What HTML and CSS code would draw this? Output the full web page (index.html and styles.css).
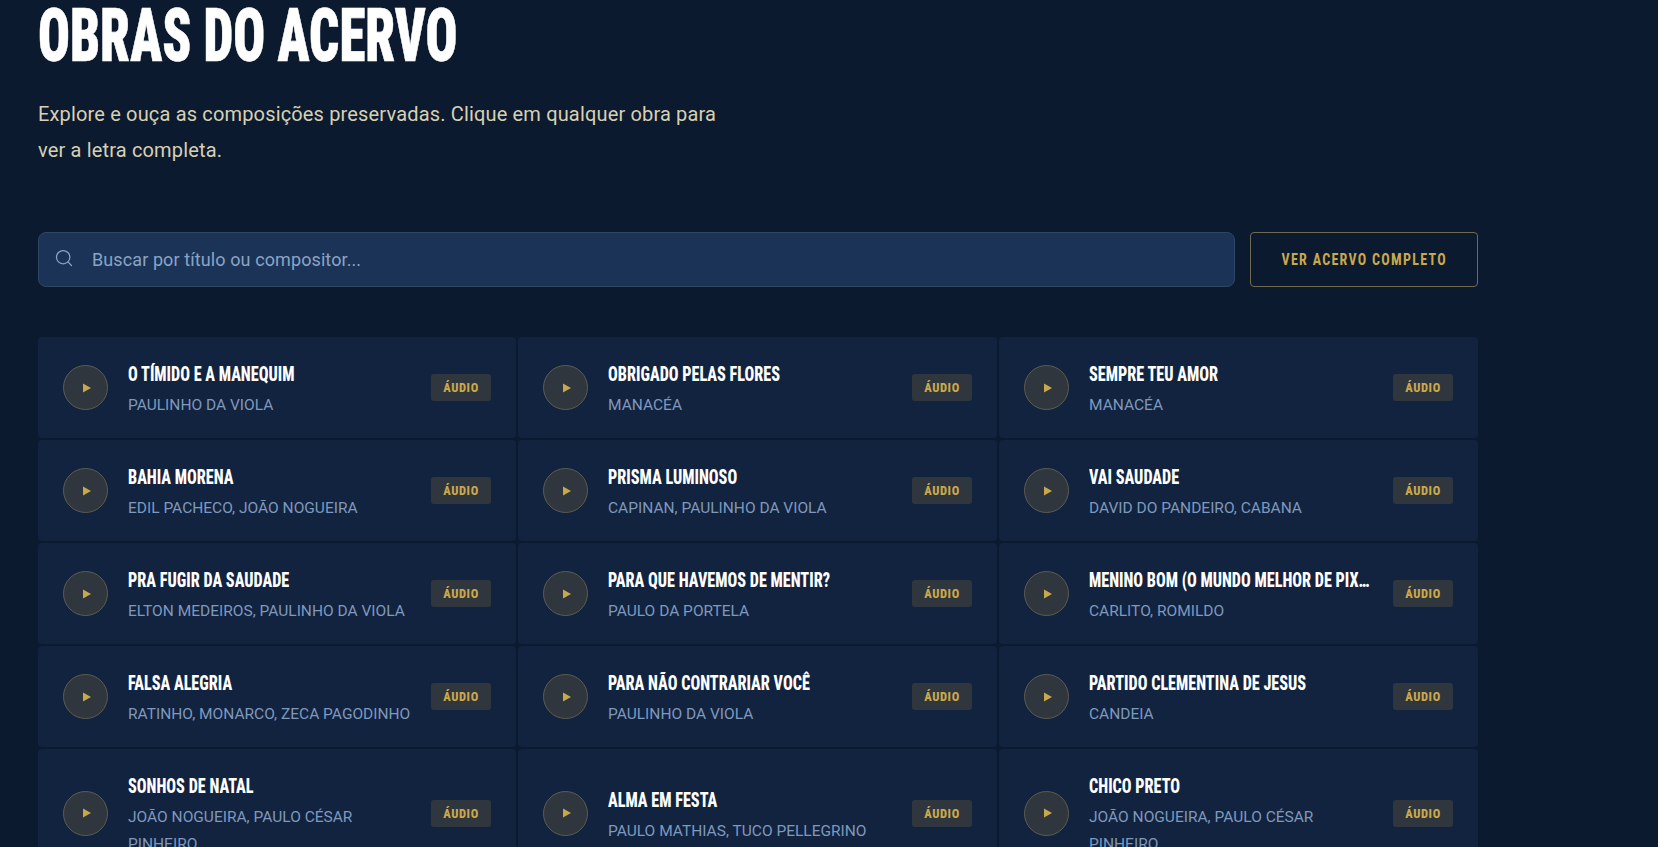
FILE: index.html
```html
<!DOCTYPE html>
<html lang="pt-BR">
<head>
    <meta charset="UTF-8">
    <meta name="viewport" content="width=device-width, initial-scale=1.0">
    <title>Obras do Acervo</title>
    <link rel="stylesheet" href="styles.css">
</head>
<body>
    <main class="container">
        <h1>Obras do Acervo</h1>
        <p class="intro">Explore e ouça as composições preservadas. Clique em qualquer obra para ver a letra completa.</p>

        <div class="toolbar">
            <label class="search">
                <svg class="search-icon" viewBox="0 0 24 24" width="20" height="20" fill="none" stroke="currentColor" stroke-width="1.5" stroke-linecap="round" stroke-linejoin="round"><circle cx="11" cy="11" r="8"/><path d="m21 21-4.3-4.3"/></svg>
                <input type="text" placeholder="Buscar por título ou compositor...">
            </label>
            <a class="btn-all" href="#"><span>Ver acervo completo</span></a>
        </div>

        <div class="grid">
            <div class="card"><span class="play"><svg viewBox="0 0 8 10" width="8" height="10"><path d="M0 0.5 8 5 0 9.5z"/></svg></span><div class="info"><div class="name">O Tímido e a Manequim</div><div class="author">Paulinho da Viola</div></div><span class="badge">Áudio</span></div>
            <div class="card"><span class="play"><svg viewBox="0 0 8 10" width="8" height="10"><path d="M0 0.5 8 5 0 9.5z"/></svg></span><div class="info"><div class="name">Obrigado pelas Flores</div><div class="author">Manacéa</div></div><span class="badge">Áudio</span></div>
            <div class="card"><span class="play"><svg viewBox="0 0 8 10" width="8" height="10"><path d="M0 0.5 8 5 0 9.5z"/></svg></span><div class="info"><div class="name">Sempre Teu Amor</div><div class="author">Manacéa</div></div><span class="badge">Áudio</span></div>

            <div class="card"><span class="play"><svg viewBox="0 0 8 10" width="8" height="10"><path d="M0 0.5 8 5 0 9.5z"/></svg></span><div class="info"><div class="name">Bahia Morena</div><div class="author">Edil Pacheco, João Nogueira</div></div><span class="badge">Áudio</span></div>
            <div class="card"><span class="play"><svg viewBox="0 0 8 10" width="8" height="10"><path d="M0 0.5 8 5 0 9.5z"/></svg></span><div class="info"><div class="name">Prisma Luminoso</div><div class="author">Capinan, Paulinho da Viola</div></div><span class="badge">Áudio</span></div>
            <div class="card"><span class="play"><svg viewBox="0 0 8 10" width="8" height="10"><path d="M0 0.5 8 5 0 9.5z"/></svg></span><div class="info"><div class="name">Vai Saudade</div><div class="author">David do Pandeiro, Cabana</div></div><span class="badge">Áudio</span></div>

            <div class="card"><span class="play"><svg viewBox="0 0 8 10" width="8" height="10"><path d="M0 0.5 8 5 0 9.5z"/></svg></span><div class="info"><div class="name">Pra Fugir da Saudade</div><div class="author">Elton Medeiros, Paulinho da Viola</div></div><span class="badge">Áudio</span></div>
            <div class="card"><span class="play"><svg viewBox="0 0 8 10" width="8" height="10"><path d="M0 0.5 8 5 0 9.5z"/></svg></span><div class="info"><div class="name">Para que Havemos de Mentir?</div><div class="author">Paulo da Portela</div></div><span class="badge">Áudio</span></div>
            <div class="card"><span class="play"><svg viewBox="0 0 8 10" width="8" height="10"><path d="M0 0.5 8 5 0 9.5z"/></svg></span><div class="info"><div class="name">Menino Bom (O Mundo Melhor de Pixinguinha)</div><div class="author">Carlito, Romildo</div></div><span class="badge">Áudio</span></div>

            <div class="card"><span class="play"><svg viewBox="0 0 8 10" width="8" height="10"><path d="M0 0.5 8 5 0 9.5z"/></svg></span><div class="info"><div class="name">Falsa Alegria</div><div class="author">Ratinho, Monarco, Zeca Pagodinho</div></div><span class="badge">Áudio</span></div>
            <div class="card"><span class="play"><svg viewBox="0 0 8 10" width="8" height="10"><path d="M0 0.5 8 5 0 9.5z"/></svg></span><div class="info"><div class="name">Para Não Contrariar Você</div><div class="author">Paulinho da Viola</div></div><span class="badge">Áudio</span></div>
            <div class="card"><span class="play"><svg viewBox="0 0 8 10" width="8" height="10"><path d="M0 0.5 8 5 0 9.5z"/></svg></span><div class="info"><div class="name">Partido Clementina de Jesus</div><div class="author">Candeia</div></div><span class="badge">Áudio</span></div>

            <div class="card"><span class="play"><svg viewBox="0 0 8 10" width="8" height="10"><path d="M0 0.5 8 5 0 9.5z"/></svg></span><div class="info"><div class="name">Sonhos de Natal</div><div class="author">João Nogueira, Paulo César Pinheiro</div></div><span class="badge">Áudio</span></div>
            <div class="card"><span class="play"><svg viewBox="0 0 8 10" width="8" height="10"><path d="M0 0.5 8 5 0 9.5z"/></svg></span><div class="info"><div class="name">Alma em Festa</div><div class="author">Paulo Mathias, Tuco Pellegrino</div></div><span class="badge">Áudio</span></div>
            <div class="card"><span class="play"><svg viewBox="0 0 8 10" width="8" height="10"><path d="M0 0.5 8 5 0 9.5z"/></svg></span><div class="info"><div class="name">Chico Preto</div><div class="author">João Nogueira, Paulo César Pinheiro</div></div><span class="badge">Áudio</span></div>
        </div>
    </main>
</body>
</html>
```

FILE: styles.css
```css
* {
    box-sizing: border-box;
}
html, body {
    height: 100%;
    overflow: hidden;
}
body {
    margin: 0;
    background-color: #0b1a2f;
    color: #fff;
    font-family: Roboto, "Liberation Sans", sans-serif;
}
.container {
    width: 1440px;
    margin-left: 38px;
}
/* no condensed display face here, so squeeze the narrowest Roboto cut */
h1 {
    margin: 0 0 24px;
    font-stretch: 75%;
    font-size: 74px;
    font-weight: 900;
    line-height: 72px;
    -webkit-text-stroke: 0.6px #fff;
    text-transform: uppercase;
    white-space: nowrap;
    transform: scaleX(0.716);
    transform-origin: left;
}
.intro {
    width: 700px;
    margin: 0 0 64px;
    font-size: 20px;
    line-height: 36px;
    letter-spacing: 0.16px;
    color: #d8d0b4;
}
.toolbar {
    display: flex;
    gap: 15px;
    margin-bottom: 50px;
}
.search {
    flex: 1;
    display: flex;
    align-items: center;
    gap: 18px;
    height: 55px;
    padding: 0 15px;
    background: #1a3357;
    border: 1px solid #2f4765;
    border-radius: 8px;
    color: #8ba3c4;
}
.search-icon {
    flex-shrink: 0;
    margin-top: -3px;
}
.search input {
    flex: 1;
    border: 0;
    outline: 0;
    padding: 0;
    background: none;
    color: #fff;
    font-family: inherit;
    font-size: 18px;
    letter-spacing: 0.1px;
}
.search input::placeholder {
    color: #8ba3c4;
    opacity: 1;
}
.btn-all {
    display: flex;
    align-items: center;
    justify-content: center;
    width: 228px;
    height: 55px;
    border: 1px solid #6f6a50;
    border-radius: 4px;
    color: #c9a84c;
    font-stretch: 75%;
    font-size: 16.5px;
    font-weight: 700;
    letter-spacing: 1.5px;
    text-decoration: none;
    text-transform: uppercase;
    white-space: nowrap;
}
.btn-all span {
    display: inline-block;
    transform: scaleX(0.85);
}
.grid {
    display: grid;
    grid-template-columns: 478px 479px minmax(0, 1fr);
    gap: 2px;
}
.card {
    display: flex;
    align-items: center;
    gap: 20px;
    padding: 22px 25px;
    background: #12233f;
    border-radius: 4px;
}
.play {
    flex-shrink: 0;
    display: flex;
    align-items: center;
    justify-content: center;
    width: 45px;
    height: 45px;
    border: 1px solid #5c5c50;
    border-radius: 50%;
    background: #30363d;
}
.play svg {
    fill: #c9a84c;
    margin-left: 2px;
}
.info {
    flex: 1;
    min-width: 0;
}
.name {
    width: calc(100% / 0.77);
    overflow: hidden;
    margin: 2px 0 4px;
    font-stretch: 75%;
    font-size: 21px;
    font-weight: 800;
    line-height: 27px;
    text-overflow: ellipsis;
    text-transform: uppercase;
    white-space: nowrap;
    transform: scaleX(0.77);
    transform-origin: left;
}
.author {
    margin-bottom: -3px;
    font-size: 15.5px;
    line-height: 27px;
    color: #7f98bd;
    text-transform: uppercase;
}
.badge {
    flex-shrink: 0;
    width: 60px;
    height: 27px;
    line-height: 27px;
    text-align: center;
    background: #30363d;
    border-radius: 3px;
    color: #c9a84c;
    font-stretch: 75%;
    font-size: 12.5px;
    font-weight: 800;
    letter-spacing: 0.6px;
    text-transform: uppercase;
}
```
